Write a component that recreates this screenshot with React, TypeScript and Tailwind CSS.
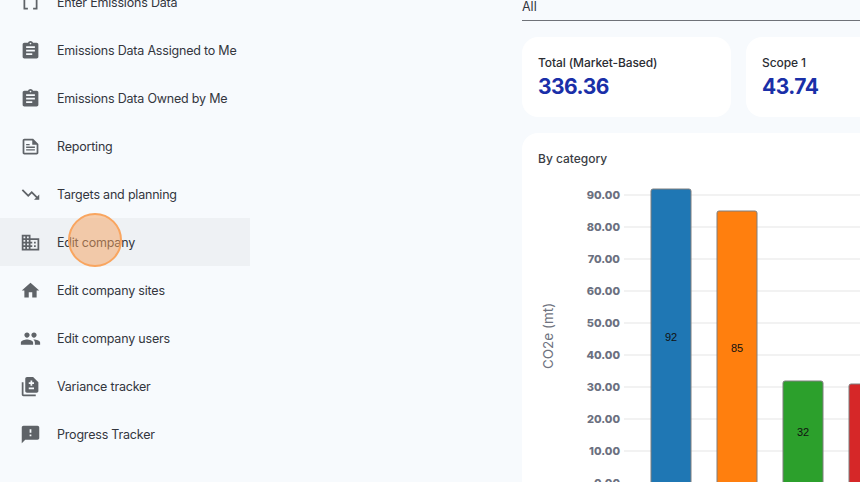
import React from "react";

const icons = {
  dataArray: "M15 4v2h3v12h-3v2h5V4h-5zM4 20h5v-2H6V6h3V4H4v16z",
  assignment:
    "M19 3h-4.18C14.4 1.84 13.3 1 12 1c-1.3 0-2.4.84-2.82 2H5c-1.1 0-2 .9-2 2v14c0 1.1.9 2 2 2h14c1.1 0 2-.9 2-2V5c0-1.1-.9-2-2-2zm-7 0c.55 0 1 .45 1 1s-.45 1-1 1-1-.45-1-1 .45-1 1-1zm2 14H7v-2h7v2zm3-4H7v-2h10v2zm0-4H7V7h10v2z",
  // wider page with a folded corner, as in the reference
  description:
    "M15 3H5c-1.1 0-2 .9-2 2v14c0 1.1.9 2 2 2h14c1.1 0 2-.9 2-2V9l-6-6zm4 16H5V5h9v5h5v9zM7 9h4v1.6H7zm0 3h10v1.6H7zm0 3h10v1.6H7z",
  trendingDown: "M16 18l2.29-2.29-4.88-4.88-4 4L2 7.41 3.41 6l6 6 4-4 6.3 6.29L22 12v6z",
  domain:
    "M12 7V3H2v18h20V7H12zM6 19H4v-2h2v2zm0-4H4v-2h2v2zm0-4H4V9h2v2zm0-4H4V5h2v2zm4 12H8v-2h2v2zm0-4H8v-2h2v2zm0-4H8V9h2v2zm0-4H8V5h2v2zm10 12h-8v-2h2v-2h-2v-2h2v-2h-2V9h8v10zm-2-8h-2v2h2v-2zm0 4h-2v2h2v-2z",
  home: "M10 20v-6h4v6h5v-8h3L12 3 2 12h3v8z",
  people:
    "M16 11c1.66 0 2.99-1.34 2.99-3S17.66 5 16 5c-1.66 0-3 1.34-3 3s1.34 3 3 3zm-8 0c1.66 0 2.99-1.34 2.99-3S9.66 5 8 5C6.34 5 5 6.34 5 8s1.34 3 3 3zm0 2c-2.33 0-7 1.17-7 3.5V19h14v-2.5c0-2.33-4.67-3.5-7-3.5zm8 0c-.29 0-.62.02-.97.05 1.16.84 1.97 1.97 1.97 3.45V19h6v-2.5c0-2.33-4.67-3.5-7-3.5z",
  difference:
    "M18 23H4c-1.1 0-2-.9-2-2V7h2v14h14v2zM15 1H8c-1.1 0-1.99.9-1.99 2L6 17c0 1.1.89 2 1.99 2H19c1.1 0 2-.9 2-2V7l-6-6zm1 14h-6v-2h6v2zm0-6h-2v2h-2v-2h-2V7h2V5h2v2h2v2z",
  feedback:
    "M20 2H4c-1.1 0-1.99.9-1.99 2L2 22l4-4h14c1.1 0 2-.9 2-2V4c0-1.1-.9-2-2-2zm-7 12h-2v-2h2v2zm0-4h-2V6h2v4z",
};

const menu = [
  { label: "Enter Emissions Data", icon: icons.dataArray },
  { label: "Emissions Data Assigned to Me", icon: icons.assignment },
  { label: "Emissions Data Owned by Me", icon: icons.assignment },
  { label: "Reporting", icon: icons.description },
  { label: "Targets and planning", icon: icons.trendingDown },
  { label: "Edit company", icon: icons.domain, active: true },
  { label: "Edit company sites", icon: icons.home },
  { label: "Edit company users", icon: icons.people },
  { label: "Variance tracker", icon: icons.difference },
  { label: "Progress Tracker", icon: icons.feedback },
];

const yTicks = [
  { label: "90.00", y: 62 },
  { label: "80.00", y: 94 },
  { label: "70.00", y: 126 },
  { label: "60.00", y: 158 },
  { label: "50.00", y: 190 },
  { label: "40.00", y: 222 },
  { label: "30.00", y: 254 },
  { label: "20.00", y: 286 },
  { label: "10.00", y: 318 },
  { label: "0.00", y: 350 },
];

const bars = [
  { x: 129, top: 56, fill: "#1f77b4", value: "92", labelY: 204 },
  { x: 195, top: 78, fill: "#ff7f0e", value: "85", labelY: 215 },
  { x: 261, top: 248, fill: "#2ca02c", value: "32", labelY: 299 },
  { x: 327, top: 251, fill: "#d62728", value: "", labelY: 0 },
];

const StatCard = ({ title, value }: { title: string; value: string }) => {
  return (
    <div className="w-[209px] h-20 shrink-0 rounded-2xl bg-white pl-4 pt-[18px]">
      <div className="text-[12px] leading-4 font-medium tracking-[-0.1px] text-[#2b2d33]">{title}</div>
      <div className="mt-0.5 text-[21px] leading-7 font-bold tracking-[-0.5px] text-[#1a2fa8]">{value}</div>
    </div>
  );
};

const CategoryChart = () => {
  return (
    <svg width="338" height="349" className="absolute left-0 top-0" style={{ fontFamily: "Inter, sans-serif" }}>
      {yTicks.map((t) => (
        <g key={t.label}>
          <line x1="102" x2="338" y1={t.y} y2={t.y} stroke="#eeeeee" strokeWidth="1.5" />
          <text x="98" y={t.y + 3.5} textAnchor="end" fontSize="11" fontWeight="800" fill="#6b7080">
            {t.label}
          </text>
        </g>
      ))}
      {bars.map((b) => (
        <g key={b.x}>
          <path
            d={`M${b.x} 349V${b.top + 2}a2 2 0 0 1 2-2h36a2 2 0 0 1 2 2V349`}
            fill={b.fill}
            stroke="#7f7f7f"
            strokeWidth="1"
          />
          {b.value && (
            <text x={b.x + 20} y={b.labelY + 4} textAnchor="middle" fontSize="11" fill="#111111" style={{ fontFamily: "Liberation Sans, sans-serif" }}>
              {b.value}
            </text>
          )}
        </g>
      ))}
      <text
        transform="translate(31 203) rotate(-90)"
        textAnchor="middle"
        fontSize="13.5"
        fill="#6f7380"
      >
        CO2e (mt)
      </text>
    </svg>
  );
};

export default function App() {
  return (
    <div className="relative flex h-[482px] w-[860px] overflow-hidden bg-[#f7fafd] font-['Inter',sans-serif]">
      <nav className="-mt-[22px] w-[250px] shrink-0">
        {menu.map((item) => (
          <div
            key={item.label}
            className={
              item.active
                ? "flex h-12 items-center pl-5 bg-[#eef1f4]"
                : "flex h-12 items-center pl-5"
            }
          >
            <svg width="21" height="21" viewBox="0 0 24 24" className="shrink-0 fill-[#5f6368]">
              <path d={item.icon} />
            </svg>
            <span className="ml-4 pt-0.5 text-[12.5px] tracking-[-0.2px] text-[#33363d] whitespace-nowrap">{item.label}</span>
          </div>
        ))}
      </nav>

      <main className="ml-[272px] w-[338px] shrink-0">
        <div className="h-[21px] border-b border-[#6f7278] text-[12.5px] leading-[14px] text-[#33363d]">All</div>
        <div className="mt-4 flex gap-[15px]">
          <StatCard title="Total (Market-Based)" value="336.36" />
          <StatCard title="Scope 1" value="43.74" />
        </div>
        <div className="relative mt-4 h-[380px] w-[400px] rounded-t-2xl bg-white">
          <div className="pl-4 pt-[18px] text-[12px] leading-4 font-medium text-[#3a3d44]">By category</div>
          <CategoryChart />
        </div>
      </main>

      <div className="absolute left-[68px] top-[213px] h-[54px] w-[54px] rounded-full border-2 border-[#f9a55f] bg-[#f5a25d]/50" />
    </div>
  );
}
